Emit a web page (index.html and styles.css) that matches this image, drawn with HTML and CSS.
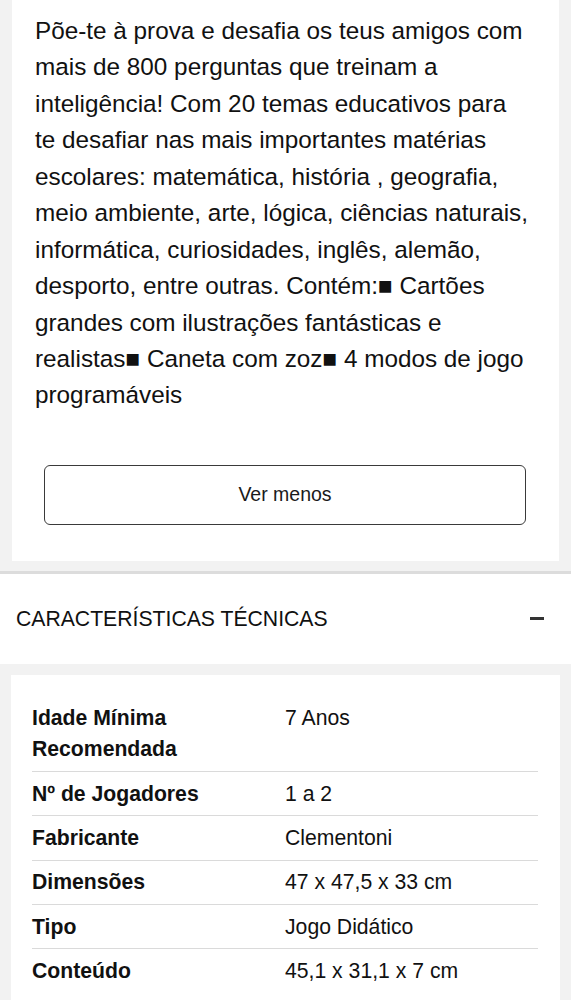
FILE: index.html
```html
<!DOCTYPE html>
<html lang="pt">
<head>
    <meta charset="UTF-8">
    <meta name="viewport" content="width=device-width, initial-scale=1.0">
    <title>Características do produto</title>
    <link rel="stylesheet" href="styles.css">
</head>
<body>

    <div class="desc-card">
        <p class="desc">Põe-te à prova e desafia os teus amigos com mais de 800 perguntas que treinam a inteligência! Com 20 temas educativos para te desafiar nas mais importantes matérias escolares: matemática, história , geografia, meio ambiente, arte, lógica, ciências naturais, informática, curiosidades, inglês, alemão, desporto, entre outras. Contém:■ Cartões grandes com ilustrações fantásticas e realistas■ Caneta com zoz■ 4 modos de jogo programáveis</p>
        <button class="toggle-btn">Ver menos</button>
    </div>

    <div class="section-head">
        <h2>CARACTERÍSTICAS TÉCNICAS</h2>
        <span class="collapse-icon"></span>
    </div>

    <div class="spec-card">
        <table class="specs">
            <tr>
                <td class="label">Idade Mínima Recomendada</td>
                <td>7 Anos</td>
            </tr>
            <tr>
                <td class="label">Nº de Jogadores</td>
                <td>1 a 2</td>
            </tr>
            <tr>
                <td class="label">Fabricante</td>
                <td>Clementoni</td>
            </tr>
            <tr>
                <td class="label">Dimensões</td>
                <td>47 x 47,5 x 33 cm</td>
            </tr>
            <tr>
                <td class="label">Tipo</td>
                <td>Jogo Didático</td>
            </tr>
            <tr>
                <td class="label">Conteúdo</td>
                <td>45,1 x 31,1 x 7 cm</td>
            </tr>
        </table>
    </div>

</body>
</html>
```

FILE: styles.css
```css
body {
    font-family: "Liberation Sans", Arial, Helvetica, sans-serif;
    background-color: #f2f2f2;
    color: #111;
    margin: 0;
    padding: 0;
}
.desc-card {
    background-color: white;
    margin: 0 12px 10px 12px;
    padding: 13px 0 36px 0;
}
.desc {
    margin: 0;
    padding: 0 28px 0 23px;
    font-size: 24.3px;
    line-height: 1.5;
}
.toggle-btn {
    display: block;
    box-sizing: border-box;
    width: calc(100% - 65px);
    height: 60px;
    margin: 51px 33px 0 32px;
    background-color: white;
    color: #1a1a1a;
    border: 1px solid #3a3a3a;
    border-radius: 6px;
    font-family: inherit;
    font-size: 19.5px;
    cursor: pointer;
}
.section-head {
    background-color: white;
    border-top: 3px solid #dcdcdc;
    height: 90px;
    padding: 0 27px 0 16px;
    display: flex;
    justify-content: space-between;
    align-items: center;
}
.section-head h2 {
    margin: 0;
    font-size: 21.2px;
    font-weight: normal;
}
.collapse-icon {
    width: 14px;
    height: 3px;
    background-color: #333;
}
.spec-card {
    background-color: white;
    margin: 11px 11px 0 11px;
    padding: 21px 22px 21px 21px;
}
.specs {
    width: 100%;
    border-collapse: collapse;
    font-size: 21.2px;
    line-height: 1.5;
}
.specs td {
    width: 50%;
    padding: 5.75px 0;
    vertical-align: top;
    border-bottom: 1px solid #dadada;
}
.specs tr:last-child td {
    border-bottom: none;
}
.specs .label {
    font-weight: bold;
}
```
